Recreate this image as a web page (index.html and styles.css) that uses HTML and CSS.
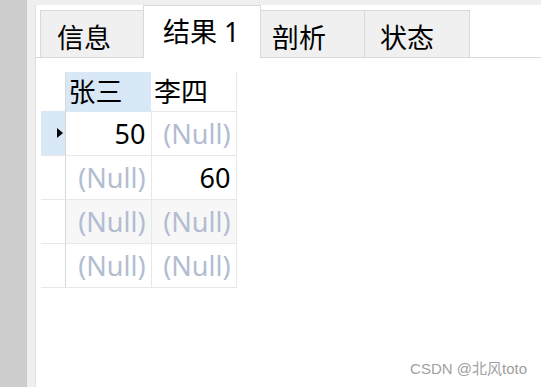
FILE: index.html
```html
<!DOCTYPE html>
<html lang="zh">
<head>
<meta charset="utf-8">
<link rel="stylesheet" href="styles.css">
</head>
<body>
<div class="app">
  <div class="sidebar"></div>
  <div class="frame">
    <div class="panel">
      <div class="tabs">
        <div class="tab tab-info">信息</div>
        <div class="tab tab-result active">结果 1</div>
        <div class="tab tab-profile">剖析</div>
        <div class="tab tab-status">状态</div>
      </div>
      <table class="grid">
        <colgroup>
          <col class="c-ind"><col class="c-a"><col class="c-b">
        </colgroup>
        <thead>
          <tr>
            <th class="ind"></th>
            <th class="sel">张三</th>
            <th>李四</th>
          </tr>
        </thead>
        <tbody>
          <tr>
            <td class="ind cur"><span class="arrow"></span></td>
            <td class="num">50</td>
            <td class="null">(Null)</td>
          </tr>
          <tr>
            <td class="ind"></td>
            <td class="null">(Null)</td>
            <td class="num">60</td>
          </tr>
          <tr class="alt">
            <td class="ind"></td>
            <td class="null">(Null)</td>
            <td class="null">(Null)</td>
          </tr>
          <tr>
            <td class="ind"></td>
            <td class="null">(Null)</td>
            <td class="null">(Null)</td>
          </tr>
        </tbody>
      </table>
      <div class="watermark">CSDN @北风toto</div>
    </div>
  </div>
</div>
</body>
</html>
```

FILE: styles.css
```css
* { box-sizing: border-box; }
html, body { margin: 0; padding: 0; height: 100%; }
body {
  font-family: "Noto Sans", "Noto Sans CJK SC", sans-serif;
  background: #ffffff;
  color: #000;
}
.app {
  display: flex;
  height: 387px;
  width: 541px;
}
.sidebar {
  width: 27px;
  background: #cdcdcd;
  flex: none;
}
.frame {
  flex: 1;
  background: #efefef;
  padding: 5px 0 0 8px;
  display: flex;
}
.panel {
  flex: 1;
  background: #ffffff;
  border-left: 1px solid #dedede;
  position: relative;
}
.tabs {
  display: flex;
  align-items: flex-end;
  height: 53px;
  padding-left: 4px;
  border-bottom: 1px solid #d9d9d9;
}
.tab {
  height: 47px;
  background: #f0f0f0;
  border: 1px solid #d9d9d9;
  border-bottom: none;
  margin-right: -1px;
  font-size: 27px;
  line-height: 1;
  display: flex;
  align-items: center;
  padding-top: 6px;
  font-family: "Noto Sans", "Noto Sans CJK SC", sans-serif;
}
.tab.active {
  height: 53px;
  margin-bottom: -1px;
  background: #ffffff;
  position: relative;
  z-index: 1;
  padding-top: 0;
  padding-bottom: 2px;
}
.tab-info { width: 104px; padding-left: 16px; }
.tab-result { width: 118px; padding-left: 19px; }
.tab-profile { width: 105px; padding-left: 11px; }
.tab-status { width: 106px; padding-left: 15px; }

.grid {
  border-collapse: collapse;
  table-layout: fixed;
  margin: 14px 0 0 5px;
  font-size: 27px;
}
.c-ind { width: 24px; }
.c-a { width: 86px; }
.c-b { width: 85px; }
.grid th {
  height: 39px;
  font-weight: normal;
  text-align: left;
  padding: 0 0 0 3px;
  border-right: 1px solid #e8e8e8;
  border-bottom: 1px solid #e8e8e8;
  line-height: 1;
}
.grid th.ind { border-right: 1px solid #d8d8d8; border-bottom: none; }
.grid th.sel { background: #d9e8f7; border-right: none; border-bottom-color: #d9e8f7; }
.grid td {
  height: 44px;
  padding: 0 5px 0 0;
  text-align: right;
  border-right: 1px solid #e8e8e8;
  border-bottom: 1px solid #e8e8e8;
  line-height: 1;
}
.grid td.ind {
  border-right: 1px solid #d8d8d8;
  padding: 0;
  background: #ffffff;
}
.grid td.ind.cur { background: #d9e8f7; }
.grid tr.alt td { background: #f7f7f7; }
.grid tr.alt td.ind { background: #ffffff; }
.null { color: #b2bdd2; }
.arrow {
  display: block;
  width: 0;
  height: 0;
  margin-left: 16px;
  border-top: 5px solid transparent;
  border-bottom: 5px solid transparent;
  border-left: 6px solid #000;
}
.watermark {
  position: absolute;
  right: 14px;
  bottom: 9px;
  font-family: "Liberation Sans", "Noto Sans CJK SC", sans-serif;
  font-size: 15px;
  color: #a0a0a0;
}
```
